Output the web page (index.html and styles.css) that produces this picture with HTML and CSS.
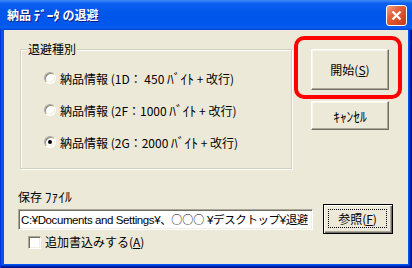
FILE: index.html
```html
<!DOCTYPE html>
<html lang="ja">
<head>
<meta charset="utf-8">
<title>納品 ﾃﾞｰﾀ の退避</title>
<link rel="stylesheet" href="styles.css">
</head>
<body>
<div class="window">
  <div class="titlebar">
    <span class="title">納品 <span class="hk">ﾃﾞｰﾀ</span> の退避</span>
    <span class="close"><svg width="13" height="13" viewBox="0 0 13 13"><path d="M2.5 2.5 L10.5 10.5 M10.5 2.5 L2.5 10.5" stroke="#fff" stroke-width="2.3" fill="none"/></svg></span>
  </div>
  <div class="frame">
    <div class="content">
      <div class="top">
        <fieldset class="group">
          <legend>退避種別</legend>
          <div class="opt"><span class="radio"></span><span>納品情報 (1D： 450 <span class="hk">ﾊﾞｲﾄ</span> + 改行)</span></div>
          <div class="opt"><span class="radio"></span><span>納品情報 (2F：1000 <span class="hk">ﾊﾞｲﾄ</span> + 改行)</span></div>
          <div class="opt"><span class="radio checked"></span><span>納品情報 (2G：2000 <span class="hk">ﾊﾞｲﾄ</span> + 改行)</span></div>
        </fieldset>
        <div class="actions">
          <div class="btn start">開始(<u>S</u>)</div>
          <div class="btn cancel"><span class="hk">ｷｬﾝｾﾙ</span></div>
          <div class="highlight"></div>
        </div>
      </div>
      <div class="file">
        <div class="file-label">保存 <span class="hk">ﾌｧｲﾙ</span></div>
        <div class="file-row">
          <div class="field">C:¥Documents and Settings¥、<span class="cjk">○○○</span> ¥デスクトップ¥退避</div>
          <div class="btn browse"><span class="focus">参照(<u>F</u>)</span></div>
        </div>
        <div class="check-row"><span class="checkbox"></span><span>追加書込みする(<u>A</u>)</span></div>
      </div>
    </div>
  </div>
</div>
</body>
</html>
```

FILE: styles.css
```css
* { box-sizing: border-box; }
body {
  margin: 0;
  font: 12px/14px "Noto Sans CJK JP", "Noto Sans", sans-serif;
  color: #000;
}
.hk { font-size: 13.5px; }
.window {
  width: 412px;
  height: 268px;
  display: flex;
  flex-direction: column;
}
.titlebar {
  height: 30px;
  flex: none;
  display: flex;
  align-items: center;
  justify-content: space-between;
  padding: 0 5px 0 7px;
  background: linear-gradient(180deg, #3d8cf5 0%, #0a5ff0 12%, #0055ea 45%, #0058ee 85%, #0a5ff0 92%, #0043d4 100%);
}
.title {
  color: #fff;
  font-weight: bold;
  font-size: 12px;
  text-shadow: 1px 1px #0a1e8a;
}
.title .hk { font-size: 13px; }
.close {
  width: 21px;
  height: 21px;
  border: 1px solid #fff;
  border-radius: 3px;
  background: linear-gradient(135deg, #f3a486 0%, #e2643e 35%, #d64a22 70%, #c23a12 100%);
  display: flex;
  align-items: center;
  justify-content: center;
}
.close svg { display: block; }
.frame {
  flex: 1;
  display: flex;
  padding: 0 4px 4px;
  background: #0055ea;
  box-shadow: inset 1px 0 #0831d9, inset -1px -1px #00138c, inset -2px -2px #001ea0, inset -3px -3px #003bda;
}
.content {
  flex: 1;
  background: #ece9d8;
}
.top {
  display: flex;
  align-items: flex-start;
}
.group {
  margin: 12px 0 0 16px;
  width: 272px;
  min-inline-size: 0;
  padding: 6px 0 10px 23px;
  border: 1px solid #d0d0bf;
  box-shadow: 1px 1px 0 #fff, inset 1px 1px 0 #fff;
}
.group legend {
  margin-left: -17px;
  padding: 0 1px;
  background: #ece9d8;
}
.opt {
  height: 32px;
  display: flex;
  align-items: center;
  gap: 4px;
}
.radio {
  width: 12px;
  height: 12px;
  border-radius: 50%;
  background: #fff;
  border: 1px solid;
  border-color: #aca899 #fff #fff #aca899;
  box-shadow: inset 1px 1px #8a887c, inset -1px -1px #f1efe2;
  display: flex;
  align-items: center;
  justify-content: center;
}
.radio.checked::after {
  content: "";
  width: 4px;
  height: 4px;
  border-radius: 50%;
  background: #000;
}
.actions {
  position: relative;
  margin: 19px 0 0 19px;
  width: 78px;
}
.btn {
  width: 78px;
  display: flex;
  align-items: center;
  justify-content: center;
  background: #ece9d8;
  border: 1px solid;
  border-color: #fff #716f64 #716f64 #fff;
  box-shadow: inset -1px -1px #aca899, inset 1px 1px #f7f5ec;
}
.btn u { text-underline-offset: 1px; }
.start { height: 41px; }
.cancel { height: 29px; margin-top: 11px; }
.highlight {
  position: absolute;
  left: -17px;
  top: -13px;
  width: 108px;
  height: 63px;
  border: 4px solid #ff0000;
  border-radius: 10px;
}
.file {
  margin: 20px 0 0 14px;
}
.file-label {
  height: 14px;
}
.file-row {
  margin-top: 1px;
  height: 30px;
  display: flex;
  align-items: center;
}
.field {
  width: 295px;
  height: 21px;
  background: #fff;
  border: 1px solid;
  border-color: #aca899 #fff #fff #aca899;
  box-shadow: inset 1px 1px #716f64, inset -1px -1px #f1efe2;
  padding: 2px 0 0 2px;
  white-space: nowrap;
  overflow: hidden;
  font-family: "Liberation Sans", "Noto Sans CJK JP", sans-serif;
  font-size: 11.5px;
  letter-spacing: -0.4px;
}
.field .cjk {
  font-family: "Noto Sans CJK JP", sans-serif;
  font-size: 11px;
  letter-spacing: 0;
}
.browse {
  width: 70px;
  height: 30px;
  margin-left: 10px;
  border: 1px solid #000;
  box-shadow: inset 1px 1px #fff, inset -1px -1px #716f64, inset -2px -2px #aca899;
  padding: 4px 5px 5px 4px;
}
.focus {
  flex: 1;
  align-self: stretch;
  display: flex;
  align-items: center;
  justify-content: center;
  border: 1px dotted #000;
}
.check-row {
  margin-top: 1px;
  display: flex;
  align-items: center;
  gap: 4px;
  padding-left: 10px;
  height: 14px;
}
.checkbox {
  width: 13px;
  height: 13px;
  background: #fff;
  border: 1px solid;
  border-color: #aca899 #fff #fff #aca899;
  box-shadow: inset 1px 1px #716f64, inset -1px -1px #f1efe2;
}
```
